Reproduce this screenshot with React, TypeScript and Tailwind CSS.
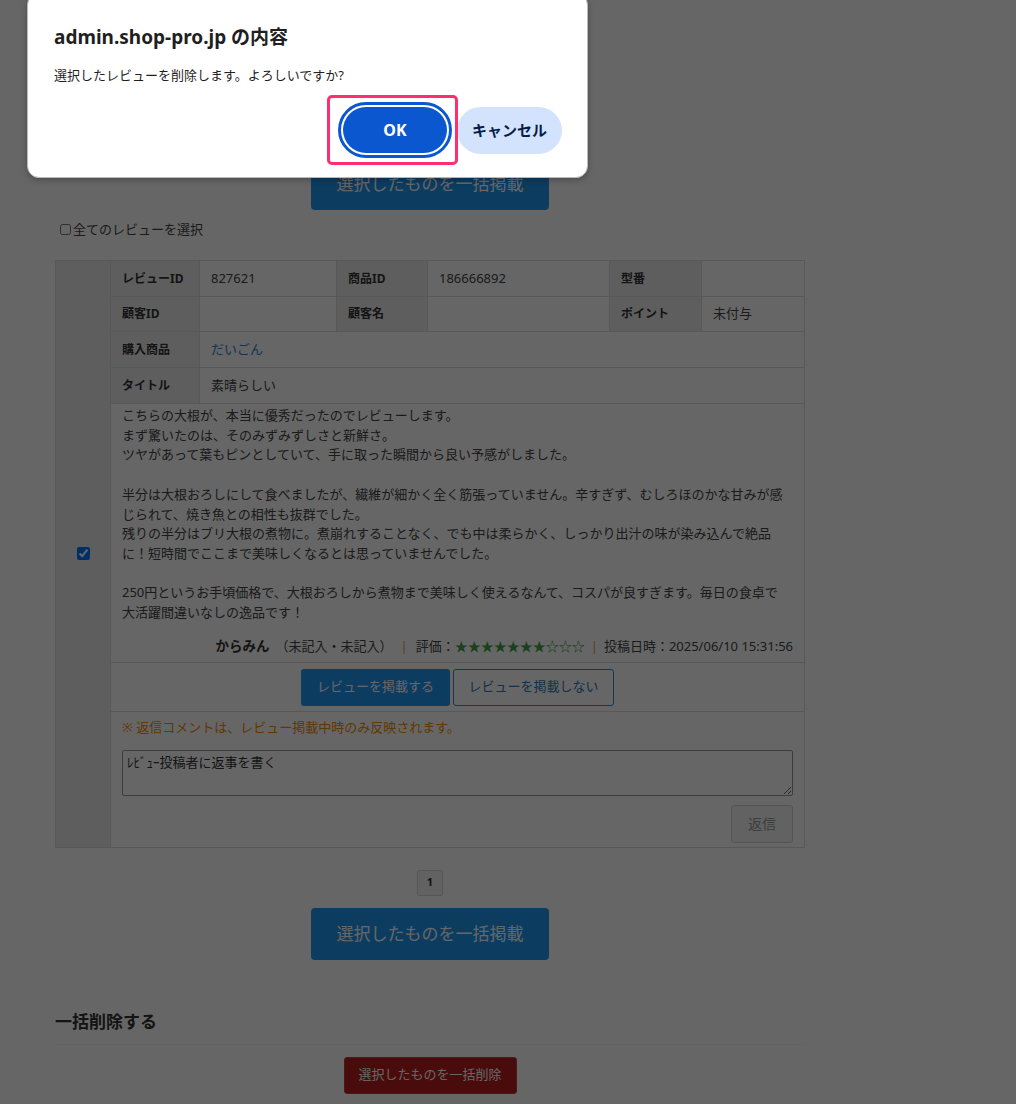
import React from 'react';

const reviewLines = [
  'こちらの大根が、本当に優秀だったのでレビューします。',
  'まず驚いたのは、そのみずみずしさと新鮮さ。',
  'ツヤがあって葉もピンとしていて、手に取った瞬間から良い予感がしました。',
  '',
  '半分は大根おろしにして食べましたが、繊維が細かく全く筋張っていません。辛すぎず、むしろほのかな甘みが感じられて、焼き魚との相性も抜群でした。',
  '残りの半分はブリ大根の煮物に。煮崩れすることなく、でも中は柔らかく、しっかり出汁の味が染み込んで絶品に！短時間でここまで美味しくなるとは思っていませんでした。',
  '',
  '250円というお手頃価格で、大根おろしから煮物まで美味しく使えるなんて、コスパが良すぎます。毎日の食卓で大活躍間違いなしの逸品です！',
];

function Pager() {
  return (
    <div className="flex justify-center">
      <span className="flex h-[26px] w-[26px] items-center justify-center rounded-[2px] border border-[#d6d6d6] bg-[#f6f6f6] text-[11px] font-bold text-[#333]">
        1
      </span>
    </div>
  );
}

function BulkPublishButton() {
  return (
    <div className="flex justify-center">
      <button className="h-[52px] w-[238px] rounded-[4px] bg-[#2196f3] text-[17px] text-white">
        選択したものを一括掲載
      </button>
    </div>
  );
}

function ReviewCard() {
  const th = 'flex items-center border-b border-r border-[#dcdcdc] bg-[#ececec] px-[11px] text-[12px] font-bold text-[#333]';
  const td = 'flex items-center border-b border-r border-[#dcdcdc] px-[11px] text-[13px]';

  return (
    <div className="flex border border-[#dcdcdc]">
      <div className="flex w-[55px] shrink-0 items-center justify-center border-r border-[#dcdcdc] bg-[#ececec]">
        <input type="checkbox" defaultChecked className="m-0 h-[13px] w-[13px]" />
      </div>

      <div className="min-w-0 flex-1">
        {/* Info grid */}
        <div className="grid grid-cols-[89px_137px_91px_182px_92px_1fr]">
          <div className={`${th} h-[36px]`}>レビューID</div>
          <div className={`${td} h-[36px]`}>827621</div>
          <div className={`${th} h-[36px]`}>商品ID</div>
          <div className={`${td} h-[36px]`}>186666892</div>
          <div className={`${th} h-[36px]`}>型番</div>
          <div className={`${td} h-[36px] border-r-0`}></div>

          <div className={`${th} h-[35px]`}>顧客ID</div>
          <div className={`${td} h-[35px]`}></div>
          <div className={`${th} h-[35px]`}>顧客名</div>
          <div className={`${td} h-[35px]`}></div>
          <div className={`${th} h-[35px]`}>ポイント</div>
          <div className={`${td} h-[35px] border-r-0`}>未付与</div>

          <div className={`${th} h-[36px]`}>購入商品</div>
          <div className={`${td} col-span-5 h-[36px] border-r-0`}>
            <a href="#" className="text-[#2f86d6]">だいごん</a>
          </div>

          <div className={`${th} h-[36px]`}>タイトル</div>
          <div className={`${td} col-span-5 h-[36px] border-r-0`}>素晴らしい</div>
        </div>

        {/* Review body */}
        <div className="border-b border-[#dcdcdc] pb-[6px] pl-[11px] pr-[11px] pt-[2px] text-[13px]">
          <div className="mr-[5px] leading-[19.7px]">
            {reviewLines.map((line, i) => (
              <p key={i}>{line === '' ? '\u00a0' : line}</p>
            ))}
          </div>
          <div className="mt-[13px] flex justify-end leading-[20px]">
            <span className="text-[13.5px] font-bold text-[#333]">からみん</span>
            <span className="ml-[6px]">（未記入・未記入）</span>
            <span className="mx-[8px] text-[#e8a050]">|</span>
            <span>評価：</span>
            <span className="text-[#43a047]">★★★★★★★☆☆☆</span>
            <span className="mx-[6px] text-[#e8a050]">|</span>
            <span>投稿日時：2025/06/10 15:31:56</span>
          </div>
        </div>

        {/* Publish buttons */}
        <div className="flex justify-center gap-[3px] border-b border-[#dcdcdc] pb-[5px] pt-[6px]">
          <button className="h-[37px] w-[149px] rounded-[3px] bg-[#2196f3] text-[13px] text-white">
            レビューを掲載する
          </button>
          <button className="h-[37px] w-[161px] rounded-[3px] border border-[#2f8ae0] bg-white text-[13px] text-[#3278b8]">
            レビューを掲載しない
          </button>
        </div>

        {/* Reply */}
        <div className="px-[11px] pb-[4px] pt-[5px]">
          <p className="text-[13px] leading-[20px] text-[#f08c00]">※ 返信コメントは、レビュー掲載中時のみ反映されます。</p>
          <textarea
            className="mt-[13px] block h-[46px] w-full rounded-[2px] border border-[#9a9a9a] bg-white px-[4px] py-[2px] text-[13px] leading-[18px] placeholder:text-[#333]"
            placeholder="ﾚﾋﾞｭｰ投稿者に返事を書く"
          />
          <div className="mt-[9px] flex justify-end">
            <button className="h-[38px] w-[62px] rounded-[3px] border border-[#d2d2d2] bg-[#f5f5f5] text-[14px] text-[#999]">
              返信
            </button>
          </div>
        </div>
      </div>
    </div>
  );
}

function ConfirmDialog() {
  return (
    <div className="absolute left-[27px] top-[-7px] z-10 w-[561px] rounded-[12px] border border-[#b9b9b9] bg-white pb-[19px] pl-[26px] pr-[25px] pt-[31px] font-['Noto_Sans','Noto_Sans_CJK_JP',sans-serif] shadow-[0_2px_6px_rgba(0,0,0,0.25)]">
      <h1 className="text-[19px] font-bold leading-[25px] text-[#1f1f1f]">admin.shop-pro.jp の内容</h1>
      <p className="mt-[16px] text-[13px] leading-[18px] text-[#1f1f1f]">選択したレビューを削除します。よろしいですか?</p>
      <div className="mt-[18px] flex items-center justify-end gap-[5px]">
        <div className="relative">
          <button className="flex h-[56px] w-[114px] items-center justify-center rounded-full border-[3px] border-[#0b57d0] bg-white p-[2px]">
            <span className="flex h-full w-full items-center justify-center rounded-full bg-[#0b57d0] text-[16px] font-bold text-white">
              OK
            </span>
          </button>
          <span className="pointer-events-none absolute -bottom-[7px] -left-[11px] -right-[6px] -top-[7px] rounded-[5px] border-[3px] border-[#ff2f6d]" />
        </div>
        <button className="h-[47px] w-[105px] rounded-full bg-[#d3e3fd] text-[15px] font-bold text-[#041e49]">
          キャンセル
        </button>
      </div>
    </div>
  );
}

export default function App() {
  return (
    <div className="relative h-[1104px] overflow-hidden bg-white font-['Noto_Sans','Noto_Sans_CJK_JP',sans-serif] text-[#444]">
      <main className="ml-[55px] w-[750px] pt-[120px]">
        <Pager />
        <div className="mt-[12px]">
          <BulkPublishButton />
        </div>

        <label className="mb-[22px] mt-[10px] flex items-center pl-[5px] text-[13px] leading-[18px]">
          <input type="checkbox" className="m-0 mr-[2px] h-[11px] w-[11px]" />
          全てのレビューを選択
        </label>

        <ReviewCard />

        <div className="mt-[22px]">
          <Pager />
        </div>
        <div className="mt-[12px]">
          <BulkPublishButton />
        </div>

        {/* Bulk delete */}
        <h2 className="mt-[50px] border-b border-[#f8f8f8] pb-[10px] text-[17px] font-bold leading-[24px] text-[#333]">
          一括削除する
        </h2>
        <div className="mt-[12px] flex justify-center">
          <button className="h-[37px] w-[173px] rounded-[3px] border border-[#c83a3a] bg-[#b71c1c] text-[13px] text-white">
            選択したものを一括削除
          </button>
        </div>
      </main>

      <div className="absolute inset-0 bg-black/60" />
      <ConfirmDialog />
    </div>
  );
}
